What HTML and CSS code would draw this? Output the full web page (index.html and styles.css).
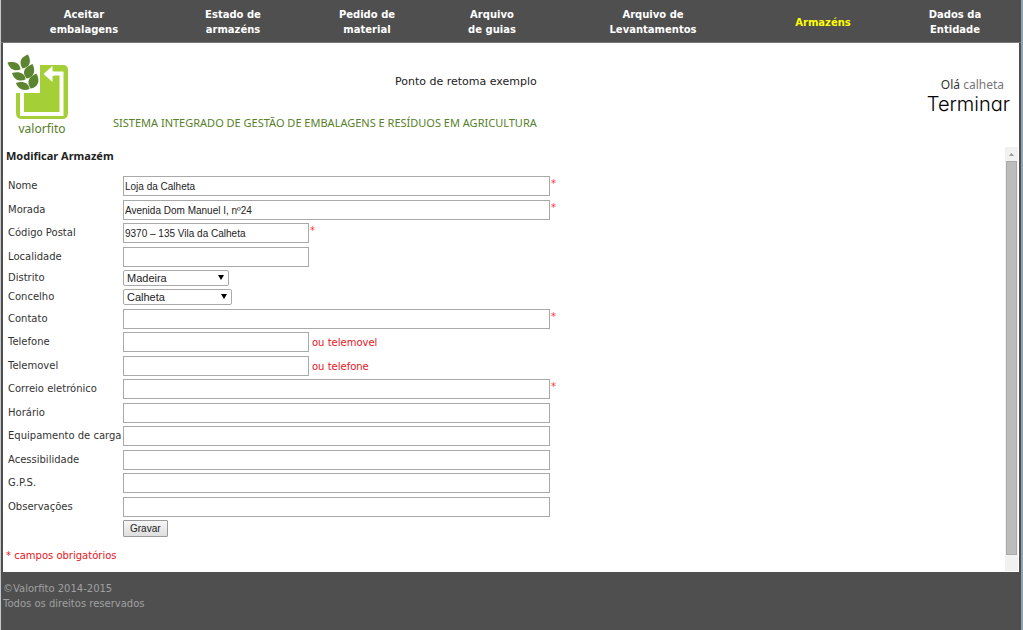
FILE: index.html
```html
<!DOCTYPE html>
<html lang="pt">
<head>
<meta charset="utf-8">
<title>Valorfito</title>
<link rel="stylesheet" href="styles.css">
</head>
<body>
<div class="frame">
<nav class="menu">
<a href="#">Aceitar<br>embalagens</a>
<a href="#">Estado de<br>armazéns</a>
<a href="#">Pedido de<br>material</a>
<a href="#">Arquivo<br>de guias</a>
<a href="#">Arquivo de<br>Levantamentos</a>
<a href="#" class="active">Armazéns</a>
<a href="#">Dados da<br>Entidade</a>
</nav>
<div class="page">
<header class="header">
<svg class="logo" width="66" height="86" viewBox="0 0 66 86" role="img" aria-label="valorfito">
<path fill="#a4cf37" d="M34 11H57Q62 11 62 16V59Q62 65 56 65H16Q10 65 10 59V39H34Z"/>
<path fill="none" stroke="#fff" stroke-width="4" d="M16 38V60H55.500V19.500H46"/>
<path fill="#fff" d="M37.500 20L46.500 12V17.500H48V22H46.500V28Z"/>
<g fill="#5b8530">
<path d="M16.500 14.500C12 7 15.500 3 22 .5C25.500 7 24.500 13 16.500 14.500Z"/>
<path d="M14.500 15.500C8 18 3.500 14.500 1.500 8.500C8.500 7 14 9 14.500 15.500Z"/>
<path d="M20.500 24.500C15 17.500 19 13 26.500 10C30 17 28 23.500 20.500 24.500Z"/>
<path d="M19.500 25.500C13 28.500 7.500 25 6 19C13 17 19 19 19.500 25.500Z"/>
<path d="M24.500 34.500C20 27 23 23 30.500 19.500C34.500 27 32 33.500 24.500 34.500Z"/>
<path d="M23.500 35C17 37.500 11.500 34.500 10 29C16.500 26.500 23 29 23.500 35Z"/>
</g>
<text class="logo-name" x="36" y="79" text-anchor="middle">valorfito</text>
</svg>
<div class="titles">
<p class="point">Ponto de retoma exemplo</p>
<p class="system">SISTEMA INTEGRADO DE GESTÃO DE EMBALAGENS E RESÍDUOS EM AGRICULTURA</p>
</div>
<div class="user">
<p class="hello">Olá <span>calheta</span></p>
<a href="#" class="logout">Terminar</a>
</div>
</header>
<main class="content">
<form class="form">
<h1>Modificar Armazém</h1>
<div class="group">
<div class="row"><label for="nome">Nome</label><input id="nome" type="text" value="Loja da Calheta"><span class="required">*</span></div>
<div class="row"><label for="morada">Morada</label><input id="morada" type="text" value="Avenida Dom Manuel I, nº24"><span class="required">*</span></div>
<div class="row"><label for="postal">Código Postal</label><input id="postal" class="short" type="text" value="9370 – 135 Vila da Calheta"><span class="required">*</span></div>
<div class="row"><label for="localidade">Localidade</label><input id="localidade" class="short" type="text"></div>
</div>
<div class="group contact">
<div class="row"><label for="distrito">Distrito</label><span class="pick"><select id="distrito"><option>Madeira</option></select></span></div>
<div class="row"><label for="concelho">Concelho</label><span class="pick"><select id="concelho" class="wide"><option>Calheta</option></select></span></div>
<div class="row"><label for="contato">Contato</label><input id="contato" type="text"><span class="required">*</span></div>
<div class="row"><label for="telefone">Telefone</label><input id="telefone" class="short" type="text"><span class="hint">ou telemovel</span></div>
<div class="row"><label for="telemovel">Telemovel</label><input id="telemovel" class="short" type="text"><span class="hint">ou telefone</span></div>
<div class="row"><label for="correio">Correio eletrónico</label><input id="correio" type="text"><span class="required">*</span></div>
<div class="row"><label for="horario">Horário</label><input id="horario" type="text"></div>
<div class="row"><label for="equipamento">Equipamento de carga</label><input id="equipamento" type="text"></div>
<div class="row"><label for="acessibilidade">Acessibilidade</label><input id="acessibilidade" type="text"></div>
<div class="row"><label for="gps">G.P.S.</label><input id="gps" type="text"></div>
<div class="row"><label for="observacoes">Observações</label><input id="observacoes" type="text"></div>
</div>
<div class="actions"><button type="submit">Gravar</button></div>
<p class="note"><span>*</span> campos obrigatórios</p>
</form>
<div class="scrollbar" aria-hidden="true">
<svg width="13" height="14" viewBox="0 0 13 14"><path fill="#999" d="M4 9L6.500 6L9 9Z"/></svg>
<div class="thumb"></div>
</div>
</main>
</div>
<footer class="footer">
<p>©Valorfito 2014-2015</p>
<p>Todos os direitos reservados</p>
</footer>
</div>
</body>
</html>
```
FILE: styles.css
```css
* { box-sizing: border-box; }
body, p, h1 { margin: 0; }
body {
  font-family: "DejaVu Sans", Verdana, sans-serif;
  font-size: 10px;
  line-height: 15px;
  color: #333;
}
.frame {
  min-height: 100vh;
  display: flex;
  flex-direction: column;
  background: #4f4f4f;
  border-left: 1px solid #c4c8cb;
  border-right: 2px solid #8fa3b3;
}
.menu {
  display: grid;
  grid-template-columns: 162fr 136fr 132fr 118fr 204fr 136fr 128fr;
  align-items: center;
  height: 43px;
  padding: 2px 2px 0;
  border-bottom: 1px solid #777;
  text-align: center;
}
.menu a {
  color: #fff;
  font-weight: bold;
  text-decoration: none;
}
.menu a.active { color: #ff0; }
.page {
  margin: 0 2px;
  background: #fff;
}
.header {
  display: flex;
  height: 104px;
  padding: 11px 9px 0 3px;
}
.logo { flex: none; }
.logo-name {
  font-family: "Noto Sans", sans-serif;
  font-size: 12px;
  fill: #567c28;
}
.titles {
  margin-left: 41px;
  padding-top: 20px;
  text-align: right;
}
.point {
  font-size: 11px;
  color: #222;
}
.system {
  margin-top: 26px;
  font-family: "Noto Sans", sans-serif;
  font-size: 11px;
  color: #56802b;
}
.user {
  margin-left: auto;
  padding-top: 23px;
  text-align: right;
}
.hello {
  padding-right: 6px;
  font-family: "Noto Sans", sans-serif;
  font-size: 12px;
}
.hello span { color: #777; }
.logout {
  display: block;
  font-family: Inter, sans-serif;
  font-size: 20px;
  font-weight: 300;
  font-feature-settings: "cv11";
  line-height: 24px;
  color: #000;
  text-decoration: none;
}
.content {
  display: flex;
  justify-content: space-between;
  padding: 0 1px 1px 0;
}
.form { padding: 1px 0 8px 3px; }
h1 {
  margin-bottom: 12px;
  font-family: "Noto Sans", sans-serif;
  font-size: 11px;
  line-height: 16px;
  color: #222;
}
.row {
  display: flex;
  align-items: center;
  margin-bottom: 3px;
  padding-left: 2px;
}
.group .row:nth-child(odd), .contact .row:nth-child(even) { margin-bottom: 4px; }
.contact .row:nth-child(odd) { margin-bottom: 3px; }
label {
  flex: none;
  width: 115px;
  line-height: 16px;
  white-space: nowrap;
}
input, select, button {
  font-family: "Liberation Sans", Arial, sans-serif;
  font-size: 10px;
  color: #222;
}
input {
  width: 427px;
  height: 20px;
  padding: 0 1px;
  border: 1px solid #a9a9a9;
  background: #fff;
}
input.short { width: 186px; }
.pick {
  display: flex;
  position: relative;
}
.pick::after {
  content: "";
  position: absolute;
  right: 5px;
  top: 5px;
  border: 3px solid transparent;
  border-top: 5px solid #000;
  border-bottom: 0;
}
select {
  appearance: none;
  width: 106px;
  height: 16px;
  padding: 0 3px;
  border: 1px solid #a9a9a9;
  border-radius: 2px;
  background: #fff;
  font-size: 11px;
}
select.wide { width: 109px; }
.required {
  align-self: flex-start;
  margin-left: 1px;
  color: #f33;
}
.hint, .note { color: #e8141c; }
.hint { margin-left: 3px; }
.actions { padding-left: 117px; }
button {
  display: block;
  height: 17px;
  padding: 0 6px;
  border: 1px solid #999;
  border-radius: 1px;
  background: linear-gradient(#f6f6f6, #dedede);
}
.note { margin-top: 11px; }
.scrollbar {
  display: flex;
  flex-direction: column;
  width: 13px;
  padding-bottom: 16px;
  background: #f1f1f1;
}
.thumb {
  flex: 1;
  margin: 0 1px;
  border: 1px solid #aaa;
  background: #bcbcbc;
}
.footer {
  padding: 9px 2px;
  color: #a0a0a0;
}
```
